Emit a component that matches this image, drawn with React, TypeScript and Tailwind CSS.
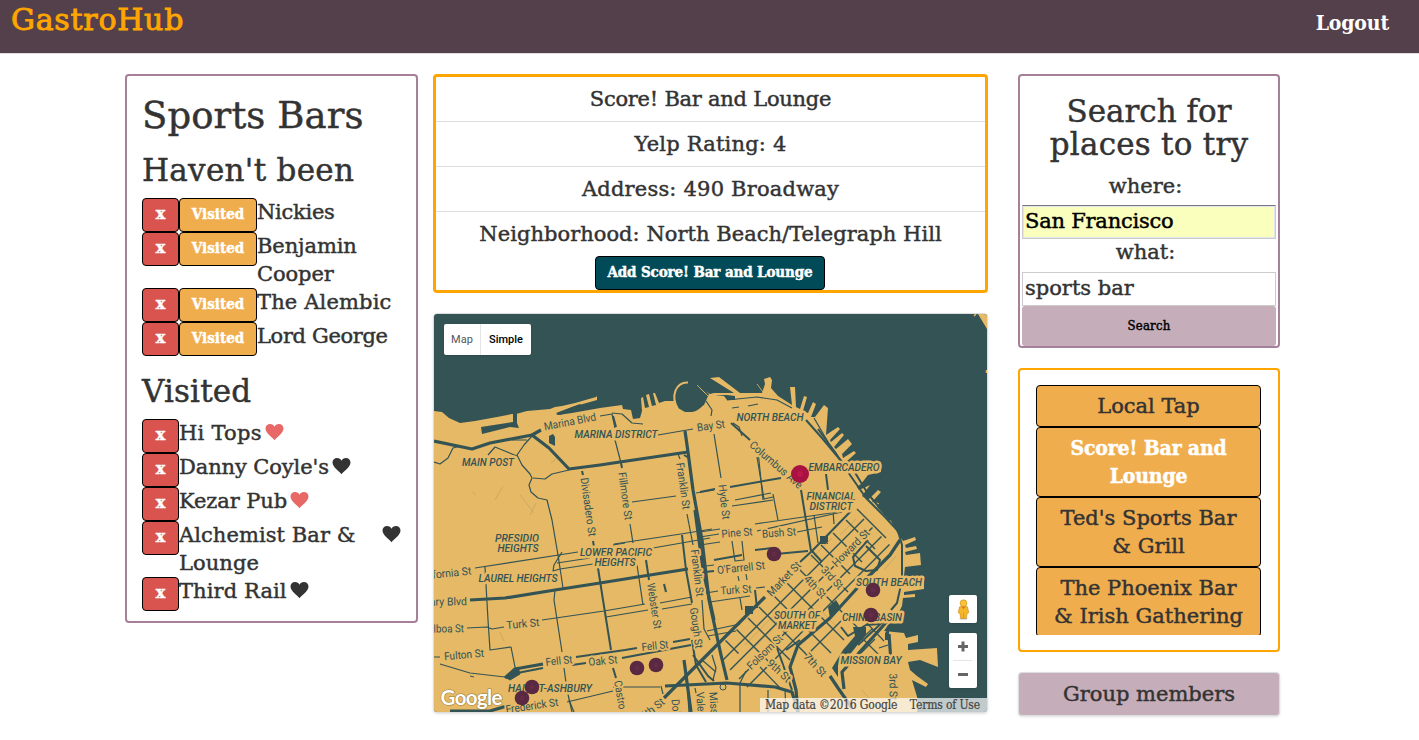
import React from "react";

const WATER = "#335355";
const LAND = "#e5b965";

/* ---------- Map data ---------- */

const coast =
  "434,411 442,412 449,418 460,423 475,421 497,417 512,414 516,414 527,411 550,409 555,407 562,406 575,403 596,397 597,396 597,400 590,402 572,407 556,414 558,415 572,413 600,408 622,405 623,409 631,410 633,419 640,418 642,411 641,398 643,397 645,408 649,407 646,395 649,394 652,406 656,405 653,393 655,393 659,403 665,401 675,401 678,408 685,412 692,412 704,405 709,394 705,391 710,394 714,393 734,393 710,378 719,377 740,393 762,393 765,384 764,379 770,377 772,380 771,388 778,396 792,405 790,387 795,387 796,407 800,409 804,396 807,397 803,411 808,413 813,402 816,404 811,417 815,417 824,405 828,408 826,435 838,427 840,429 830,440 831,442 842,433 844,435 834,447 836,449 848,439 852,444 842,454 843,458 854,451 856,453 846,462 851,466 881,462 881,472 868,475 861,484 857,487 859,490 870,485 862,496 868,500 878,490 881,492 872,502 879,503 877,507 891,521 898,534 903,541 915,537 916,540 905,545 906,548 916,546 917,549 905,552 906,555 920,553 921,565 905,567 904,576 924,576 924,589 904,592 904,595 915,594 915,597 903,598 902,606 896,618 888,625 884,631 904,633 906,638 918,635 918,642 908,644 908,650 937,648 938,667 920,660 908,662 910,670 917,676 928,684 926,687 912,680 915,690 918,700 917,713 433,713";

const minorRoads = [
  "600,416 612,414 615,428", "612,413 622,414 632,423 643,424", "615,440 621,463", "658,435 693,429",
  "532,436 524,445 517,455 522,465 530,474 532,478 529,485 531,492 538,498 547,500 552,520 558,555 563,588",
  "533,478 545,479 552,474 569,470", "434,462 440,464 448,458 453,448 460,446", "488,455 495,447 517,456",
  "512,440 527,440", "632,502 676,496", "678,454 680,459", "687,514 693,545", "696,493 714,490",
  "475,568 578,552", "614,544 681,534 712,529", "557,563 590,558", "560,569 593,564", "653,548 710,538",
  "562,552 554,565 553,571 560,569", "485,567 488,620 490,650 511,647 516,672", "542,620 604,611 645,604",
  "660,603 692,597", "606,617 648,610", "662,609 692,604", "555,590 554,600 562,652", "564,668 567,690 572,712",
  "630,524 633,543", "637,565 643,605", "467,628 487,627 492,629 504,627", "440,664 470,673 505,677", "434,657 440,657",
  "613,545 625,543", "700,532 720,529", "700,537 719,534", "700,545 720,542", "757,531 842,512", "755,524 838,512",
  "797,532 822,527", "732,541 735,561 744,560 742,541", "757,441 763,500", "757,457 764,499 773,497", "735,500 771,493",
  "732,506 773,500", "773,494 778,520", "714,434 721,478", "733,423 739,427 742,436", "732,408 739,407", "748,406 758,404",
  "706,401 712,410 711,416", "727,400 757,397 777,400 792,408", "814,418 828,442", "738,576 739,581", "746,574 747,580",
  "706,566 714,565", "706,593 718,591", "710,602 750,596", "756,588 765,587", "740,598 742,610",
  "702,600 704,629 710,640", "707,631 740,624", "708,636 736,631", "712,655 716,668 713,680",
  "740,712 740,683 746,671", "768,690 768,712", "785,690 786,712", "760,667 782,690", "687,680 689,712",
  "661,686 663,694", "613,687 660,687", "567,702 613,691", "569,700 574,712", "695,688 700,712",
  "833,511 834,524", "814,515 818,543", "864,620 884,641", "849,665 875,639", "845,655 872,629",
  "879,648 888,645", "860,636 884,660", "702,660 716,672",
];

const midRoads = [
  "582,471 583,475", "621,463 622,468", "613,416 616,427", "598,568 603,600 611,650", "646,560 649,580", "613,668 616,678",
  "684,455 689,458", "682,535 686,570 692,603", "731,423 750,440", "730,487 781,478", "700,492 715,489",
  "801,490 811,551", "826,474 828,490", "776,554 808,551", "664,584 666,592", "593,541 594,547",
  "576,657 625,650 637,648", "512,674 543,668", "572,665 586,663", "622,658 691,645", "673,642 690,639",
  "692,640 696,665 706,682", "693,655 708,676 714,681", "818,429 835,452 850,475 866,498 885,517 898,531 902,545 902,580 897,603 891,610",
  "806,420 822,438 842,462", "851,466 868,494 890,520", "800,562 812,551 851,511", "714,560 742,555",
  "755,550 772,548", "705,572 714,571", "755,590 757,608", "841,627 848,636 866,625 880,624", "858,645 887,618",
  "868,540 853,557 855,566 866,571 877,570 880,560 866,546", "776,645 792,690", "786,650 800,640", "812,551 822,562",
];

const thickRoads = [
  "434,441 472,449 490,443 532,435 549,448 569,469 600,465 620,462 688,452", "532,435 541,430",
  "685,431 688,452 693,490 702,540 709,600 721,655 727,680", "470,600 505,598 555,590 600,583 650,575 688,569",
  "695,510 703,570 714,620", "505,678 515,669 543,664", "664,698 690,672 765,597", "665,686 727,683 775,687 792,692 798,712",
  "798,712 796,690 790,667 798,645 830,618 860,585 890,555 900,540", "450,711 490,711 510,705", "830,676 838,688 852,708",
  "844,689 842,672 866,645 890,618", "684,660 691,712", "889,634 891,662",
];

/* South of Market streets run on a diagonal grid; s = x + y, d = x - y. */
const diagonal = (s1: number, d1: number, s2: number, d2: number) =>
  `${(s1 + d1) / 2},${(s1 - d1) / 2} ${(s2 + d2) / 2},${(s2 - d2) / 2}`;

const somaRoads = [
  ...[348, 326, 300, 276].map((d) => diagonal(1366, d, 1424, d)),
  diagonal(1366, 256, 1440, 256),
  ...[230, 204, 178, 152].map((d) => diagonal(1366, d, 1484, d)),
  ...[130, 107].map((d) => diagonal(1366, d, 1450, d)),
  diagonal(1366, 85, 1392, 85),
  ...[19, 36, 54, 70].map((k) => diagonal(1364 + k, 60, 1364 + k, 345)),
  diagonal(1462, 150, 1462, 240),
];

type Label = { t: string; x: number; y: number; w: number; r?: number; area?: boolean };
const labels: Label[] = [
  { t: "Marina Blvd", x: 570, y: 422, w: 53, r: -11 },
  { t: "MARINA DISTRICT", x: 616, y: 434, w: 83, area: true },
  { t: "MAIN POST", x: 488, y: 462, w: 52, area: true },
  { t: "Bay St", x: 711, y: 426, w: 28, r: -8 },
  { t: "NORTH BEACH", x: 770, y: 417, w: 67, area: true },
  { t: "EMBARCADERO", x: 844, y: 467, w: 71, area: true },
  { t: "FINANCIAL", x: 831, y: 496, w: 49, area: true },
  { t: "DISTRICT", x: 831, y: 506, w: 43, area: true },
  { t: "Columbus Ave", x: 776, y: 465, w: 66, r: 41 },
  { t: "Divisadero St", x: 588, y: 507, w: 59, r: 82 },
  { t: "Fillmore St", x: 625, y: 496, w: 48, r: 82 },
  { t: "Franklin St", x: 683, y: 486, w: 47, r: 82 },
  { t: "Hyde St", x: 724, y: 502, w: 35, r: 83 },
  { t: "PRESIDIO", x: 517, y: 538, w: 44, area: true },
  { t: "HEIGHTS", x: 518, y: 548, w: 41, area: true },
  { t: "LOWER PACIFIC", x: 616, y: 552, w: 72, area: true },
  { t: "HEIGHTS", x: 615, y: 562, w: 41, area: true },
  { t: "LAUREL HEIGHTS", x: 518, y: 578, w: 79, area: true },
  { t: "California St", x: 443, y: 574, w: 57, r: -6 },
  { t: "Geary Blvd", x: 442, y: 602, w: 50, r: -1 },
  { t: "Balboa St", x: 443, y: 629, w: 42, r: -1 },
  { t: "Turk St", x: 523, y: 624, w: 33, r: -5 },
  { t: "Fulton St", x: 464, y: 655, w: 40, r: -5 },
  { t: "Fell St", x: 559, y: 661, w: 27, r: -6 },
  { t: "Oak St", x: 603, y: 661, w: 29, r: -5 },
  { t: "Fell St", x: 655, y: 646, w: 27, r: -6 },
  { t: "Webster St", x: 654, y: 606, w: 46, r: 81 },
  { t: "Franklin St", x: 697, y: 573, w: 47, r: 83 },
  { t: "Gough St", x: 696, y: 628, w: 41, r: 82 },
  { t: "HAIGHT-ASHBURY", x: 550, y: 688, w: 84, area: true },
  { t: "Frederick St", x: 532, y: 706, w: 53, r: -8 },
  { t: "Castro", x: 620, y: 695, w: 29, r: 80 },
  { t: "Dolores St", x: 677, y: 722, w: 46, r: 85 },
  { t: "Valencia", x: 701, y: 711, w: 38, r: 86 },
  { t: "Mission", x: 714, y: 710, w: 36, r: 86 },
  { t: "14th St", x: 650, y: 711, w: 34, r: -38 },
  { t: "Pine St", x: 737, y: 533, w: 31, r: -5 },
  { t: "Bush St", x: 779, y: 533, w: 34, r: -4 },
  { t: "O'Farrell St", x: 741, y: 568, w: 48, r: -6 },
  { t: "Turk St", x: 736, y: 590, w: 31, r: -4 },
  { t: "Market St", x: 784, y: 579, w: 43, r: -46 },
  { t: "Howard St", x: 851, y: 548, w: 48, r: -45 },
  { t: "3rd St", x: 832, y: 578, w: 27, r: 47 },
  { t: "4th St", x: 815, y: 587, w: 27, r: 47 },
  { t: "Folsom St", x: 765, y: 652, w: 45, r: -44 },
  { t: "9th St", x: 779, y: 671, w: 28, r: 43 },
  { t: "7th St", x: 815, y: 665, w: 28, r: 47 },
  { t: "3rd St", x: 893, y: 687, w: 27, r: 89 },
  { t: "SOUTH BEACH", x: 889, y: 582, w: 66, area: true },
  { t: "SOUTH OF", x: 797, y: 615, w: 46, area: true },
  { t: "MARKET", x: 797, y: 625, w: 38, area: true },
  { t: "CHINA BASIN", x: 872, y: 617, w: 60, area: true },
  { t: "MISSION BAY", x: 871, y: 660, w: 61, area: true },
];

const pins: [number, number][] = [
  [774, 554], [873, 590], [871, 615], [637, 668], [656, 665], [532, 687], [522, 698],
];

const Road = ({ lines, w }: { lines: string[]; w: number }) => (
  <g fill="none" stroke={WATER} strokeWidth={w} strokeLinejoin="round">
    {lines.map((p, i) => <polyline key={i} points={p} />)}
  </g>
);

function MapDrawing() {
  return (
    <svg viewBox="434 314 553 398" className="block h-[398px] w-[553px]" fontFamily="Roboto, sans-serif">
      <rect x="434" y="314" width="553" height="398" fill={WATER} />
      <polygon points={coast} fill={LAND} />
      <polygon points="978,314 987,314 987,329" fill={LAND} />
      <path d="M974,316 L976,314 M986.500,370 V373" stroke={LAND} strokeWidth="1.5" />
      <ellipse cx="690" cy="397.500" rx="15" ry="14.500" fill={WATER} />
      <path d="M678,409 C670,396 676,382 688,382.500" fill="none" stroke={LAND} strokeWidth="2" />
      <path d="M697,385 L708,396 M700,388 L706,394 M757,384 L763,392" stroke={LAND} strokeWidth="0.8" />
      <path d="M481,427 L513,422 V414 H517 V423 L519,428 L510,427 L482,434 Z" fill={WATER} />
      <path d="M556,413 L580,404 L583,407 L584,410 L572,411 L560,415 Z" fill={WATER} />
      <path d="M549,436 L553,434 L555,437 V446 L549,443 Z" fill={WATER} />
      <path d="M715,395 H727 L735,396 V400 H727 L724,396 Z" fill={WATER} />
      <path d="M838,677 L832,668 L843,650 L855,636 L853,627 H866 V634 L848,657 L838,665 Z" fill={WATER} />
      <path d="M885,633 L889,628 V640 H885 Z" fill={WATER} />
      <path d="M820,536 h8 v8 h-8 Z M745,606 h8 v8 h-8 Z" fill={WATER} />
      <path d="M828,607 L836,600 L841,608 L830,618 Z" fill={WATER} />
      <path d="M505,677 L518,667 L520,674 L510,680 Z M470,676 l4,1" fill={WATER} stroke={WATER} />
      <path
        d="M745,645 l30,-31 M752,650 l28,-29 M757,676 l15,-15 M810,560 l22,-22 M822,612 l14,14 M858,510 l20,20 M840,535 l16,-16 M884,570 l12,-14 M862,690 l14,16 M530,515 l6,-12 M495,500 l8,-14 M472,492 l4,3 M551,463 l6,-5 M520,495 l14,18 M500,632 l4,9"
        stroke="#c3a160"
        strokeWidth="0.7"
        fill="none"
      />
      <circle cx="723" cy="687" r="3" fill="none" stroke={WATER} />
      <Road lines={minorRoads} w={1.2} />
      <Road lines={somaRoads} w={1.4} />
      <Road lines={midRoads} w={2} />
      <Road lines={thickRoads} w={3.2} />
      {labels.map((l, i) => (
        <text
          key={i}
          x={l.x}
          y={l.y}
          textAnchor="middle"
          dominantBaseline="central"
          fontSize={l.area ? 10.6 : 11}
          fontWeight={l.area ? 500 : 400}
          fontStyle={l.area ? "italic" : "normal"}
          textLength={l.w}
          lengthAdjust="spacingAndGlyphs"
          fill={WATER}
          stroke={LAND}
          strokeWidth={l.area ? 5 : 4}
          strokeLinejoin="round"
          paintOrder="stroke"
          transform={l.r ? `rotate(${l.r} ${l.x} ${l.y})` : undefined}
        >
          {l.t}
        </text>
      ))}
      {pins.map(([x, y]) => (
        <g key={`${x}-${y}`}>
          <circle cx={x} cy={y} r="7.300" fill="#592941" />
          <circle cx={x} cy={y} r="2.500" fill="#642c48" />
        </g>
      ))}
      <circle cx="800" cy="474" r="9" fill="#a81243" />
      <circle cx="800" cy="474" r="3" fill="#bd164b" />
      <text x="440.500" y="704.500" fontSize="20.500" fontWeight="700" fontFamily="Lato, sans-serif" textLength="62" fill="#fff" stroke="#a0803f" strokeWidth="1.200" paintOrder="stroke">
        Google
      </text>
    </svg>
  );
}

function Pegman() {
  return (
    <svg viewBox="0 0 14 20" className="h-[21px] w-[15px]">
      <ellipse cx="7" cy="18.500" rx="4" ry="1.200" fill="#cfcfcf" />
      <path d="M3.200 7.500 Q7 5.700 10.800 7.500 L12 13 L10.500 13.500 L9.600 18.500 H4.400 L3.500 13.500 L2 13 Z" fill="#f5b62c" stroke="#c98a12" strokeWidth="0.600" />
      <path d="M5 7.300 L7 9.500 L9 7.300 Z" fill="#e2711d" />
      <path d="M7 13 V18" stroke="#c98a12" strokeWidth="0.600" />
      <circle cx="7" cy="4" r="3.200" fill="#fbc338" stroke="#c98a12" strokeWidth="0.600" />
    </svg>
  );
}

/* ---------- Left panel ---------- */

const haventBeen = [
  { name: "Nickies", track: "tracking-[-0.28px]" },
  { name: "Benjamin Cooper", track: "tracking-[-0.1px]" },
  { name: "The Alembic", track: "tracking-[0.15px]" },
  { name: "Lord George", track: "tracking-[-0.35px]" },
];

const visited = [
  { name: "Hi Tops", track: "tracking-[0.25px]", liked: true },
  { name: "Danny Coyle's", track: "tracking-[-0.1px]", liked: false },
  { name: "Kezar Pub", track: "tracking-[-0.1px]", liked: true },
  { name: "Alchemist Bar & Lounge", track: "tracking-[0.07px]", liked: false },
  { name: "Third Rail", track: "tracking-[0.1px]", liked: false },
];

const COND = "font-['DejaVu_Serif_Condensed','DejaVu_Serif',serif]";

const RemoveButton = () => (
  <button className="h-[34px] w-[37px] shrink-0 rounded-[4px] border border-black bg-[#d9534f] pb-0.5 text-[16px] leading-[20px] font-bold text-white">x</button>
);

const Heart = ({ liked }: { liked: boolean }) => (
  <svg viewBox="0 0 18 17" className={`mt-[5px] ml-[3px] h-[17px] w-[19px] shrink-0 ${liked ? "fill-[#e86868]" : "fill-[#333333]"}`}>
    <path d="M9 16.200 C7.500 14 0 9.500 0 4.600 C0 1.800 2 0 4.600 0 C6.600 0 8.200 1 9 2.700 C9.800 1 11.400 0 13.400 0 C16 0 18 1.800 18 4.600 C18 9.500 10.500 14 9 16.200 Z" />
  </svg>
);

function BarLists() {
  return (
    <section className="h-[549px] w-[293px] rounded-[4px] border-2 border-[#a67f98] pl-[15px]">
      <h1 className="pt-[17px] text-[37px] leading-[46px] tracking-[0.1px]">Sports Bars</h1>
      <h2 className="mt-[11px] h-[48px] text-[31px] leading-[41px] tracking-[0.3px]">Haven't been</h2>
      <ul>
        {haventBeen.map((b) => (
          <li key={b.name} className="flex min-h-[34px] items-start">
            <RemoveButton />
            <button className={`${COND} h-[34px] w-[78px] shrink-0 rounded-[4px] border border-black bg-[#f0ad4e] pb-0.5 text-[15px] leading-[20px] font-bold text-white`}>Visited</button>
            <span className={`w-[142px] ${b.track}`}>{b.name}</span>
          </li>
        ))}
      </ul>
      <h2 className="mt-[15px] h-[48px] text-[31px] leading-[41px] tracking-[0.14px]">Visited</h2>
      <ul>
        {visited.map((b) => (
          <li key={b.name} className="flex min-h-[34px] items-start">
            <RemoveButton />
            <span className={`max-w-[200px] ${b.track}`}>{b.name}</span>
            <Heart liked={b.liked} />
          </li>
        ))}
      </ul>
    </section>
  );
}

/* ---------- Middle column ---------- */

const details = [
  { text: "Score! Bar and Lounge", track: "tracking-[-0.25px]" },
  { text: "Yelp Rating: 4", track: "tracking-[0.2px]" },
  { text: "Address: 490 Broadway", track: "tracking-[0.2px]" },
  { text: "Neighborhood: North Beach/Telegraph Hill", track: "tracking-[0.03px]" },
];

function PlaceDetails() {
  return (
    <section className="flex h-[219px] flex-col items-center rounded-[4px] border-[3px] border-[#ffa500]">
      {details.map((d, i) => (
        <p key={d.text} className={`flex h-[45px] w-full justify-center pt-2 ${d.track} ${i < 3 ? "border-b border-[#dddddd]" : ""}`}>{d.text}</p>
      ))}
      <button className={`${COND} -mt-px mr-px h-[34px] w-[230px] shrink-0 rounded-[4px] border border-black bg-[#004b57] pb-0.5 text-[15px] leading-[20px] font-bold tracking-[-0.12px] text-white`}>
        Add Score! Bar and Lounge
      </button>
    </section>
  );
}

function MapPanel() {
  return (
    <section className="relative mt-5 h-[400px] overflow-hidden rounded-[4px] border border-[#dddddd] shadow-sm [-webkit-text-stroke:0]">
      <MapDrawing />
      <div className="absolute top-[10px] left-[10px] flex h-[31px] w-[87px] rounded-[2px] bg-white font-[Roboto,sans-serif] text-[11px] leading-[31px] shadow">
        <span className="w-[37px] border-r border-[#e5e5e5] text-center text-[#565656]">Map</span>
        <span className="flex-1 text-center font-medium text-black">Simple</span>
      </div>
      <div className="absolute top-[281px] right-[10px] flex h-7 w-7 items-center justify-center rounded-[2px] bg-white shadow">
        <Pegman />
      </div>
      <div className="absolute top-[319px] right-[10px] h-[55px] w-7 rounded-[2px] bg-white shadow">
        <svg viewBox="0 0 28 55" className="h-[55px] w-7">
          <path d="M9 13.500 H19 M14 8.500 V18.500 M9 41.500 H19" stroke="#666" strokeWidth="3" />
          <path d="M4 27.500 H23" stroke="#e6e6e6" />
        </svg>
      </div>
      <div className={`${COND} absolute right-0 bottom-0 flex h-[14px] w-[227px] justify-between bg-white/70 pr-[7px] pl-[5px] text-[12px] leading-[14px] tracking-[-0.15px] whitespace-nowrap text-[#444] [-webkit-text-stroke:0.2px]`}>
        <span>Map data ©2016 Google</span>
        <span>Terms of Use</span>
      </div>
    </section>
  );
}

/* ---------- Right column ---------- */

function SearchPanel() {
  return (
    <section className="flex h-[274px] flex-col rounded-[4px] border-2 border-[#a67f98] px-0.5 text-center">
      <h2 className="mt-[19px] text-[31px] leading-[33px]">
        <span className="block">Search for</span>
        <span className="block tracking-[0.23px]">places to try</span>
      </h2>
      <label className="mt-[11px] h-[33px] pr-[7px] leading-[28px]">where:</label>
      <input
        className="h-[34px] border border-[#cccccc] border-t-[#77777f] bg-[#faffbd] px-0.5 pb-0.5 tracking-[-0.23px] text-black shadow-[inset_0_0_0_1px_#e4e4ee]"
        defaultValue="San Francisco"
      />
      <label className="h-[33px] pr-[7px] leading-[26px]">what:</label>
      <input className="h-[34px] border border-[#cccccc] bg-white px-0.5 pb-0.5" defaultValue="sports bar" />
      <button className={`${COND} h-10 rounded-[3px] bg-[#c5adb9] text-[13px] tracking-[0.2px] text-black`}>Search</button>
    </section>
  );
}

const results = [
  { lines: ["Local Tap"], cls: "h-[42px]" },
  { lines: ["Score! Bar and", "Lounge"], cls: "h-[70px] font-bold text-white tracking-[-0.18px] font-['DejaVu_Serif_Condensed','DejaVu_Serif',serif]" },
  { lines: ["Ted's Sports Bar", "& Grill"], cls: "h-[70px]" },
  { lines: ["The Phoenix Bar", "& Irish Gathering"], cls: "h-[70px]" },
];

function Results() {
  return (
    <section className="mt-5 h-[284px] rounded-[4px] border-2 border-[#ffa500] px-4 py-[15px]">
      <ul className="h-[250px] w-[225px] overflow-hidden text-center">
        {results.map((r) => (
          <li key={r.lines[0]} className={`rounded-[4px] border border-black bg-[#f0ad4e] pt-[6px] whitespace-nowrap ${r.cls}`}>
            {r.lines.map((l) => <span key={l} className="block">{l}</span>)}
          </li>
        ))}
      </ul>
    </section>
  );
}

export default function App() {
  return (
    <div className="h-[740px] overflow-hidden bg-white font-['DejaVu_Serif',serif] text-[21px] leading-[28px] text-[#333333] [-webkit-text-stroke:0.45px]">
      <header className="flex h-[54px] items-start justify-between border-b border-[#e0dce0] bg-[#54404a] pr-[30px] pl-[11px]">
        <a className="text-[30px] leading-[39px] tracking-[0.75px] text-[#ffa500] [-webkit-text-stroke:0.9px]">GastroHub</a>
        <a className={`${COND} pt-[9px] font-bold tracking-[-0.15px] text-white [-webkit-text-stroke:0]`}>Logout</a>
      </header>
      <main className="flex pt-5 pl-[125px]">
        <BarLists />
        <div className="ml-[15px] w-[555px]">
          <PlaceDetails />
          <MapPanel />
        </div>
        <div className="ml-[30px] w-[262px]">
          <SearchPanel />
          <Results />
          <div className="mt-5 h-[44px] rounded-[4px] border border-[#dddddd] bg-[#c5adb9] pt-[7px] text-center shadow-sm">Group members</div>
        </div>
      </main>
    </div>
  );
}
